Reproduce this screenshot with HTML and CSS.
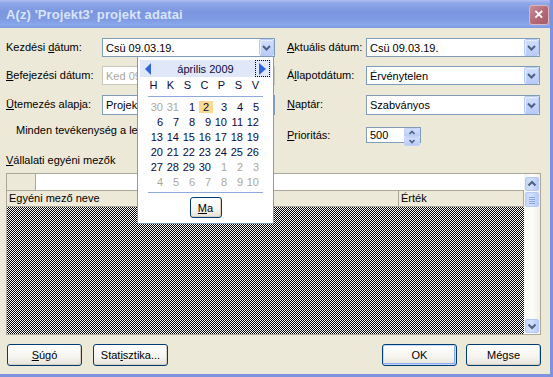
FILE: index.html
```html
<!DOCTYPE html>
<html lang="hu">
<head>
    <meta charset="UTF-8">
    <title>A(z) 'Projekt3' projekt adatai</title>
    <link rel="stylesheet" href="styles.css">
</head>
<body>

    <div class="window">

        <div class="titlebar">
            <span class="title">A(z) 'Projekt3' projekt adatai</span>
            <span class="close">
                <svg width="20" height="19" viewBox="0 0 20 19">
                    <path d="M6 5.5 L13.5 13 M13.5 5.5 L6 13" stroke="#fff" stroke-width="2" fill="none"/>
                </svg>
            </span>
        </div>

        <div class="content">

            <div class="form">
                <label>Kezdési <u>d</u>átum:</label>
                <div class="combo">
                    <span class="combo__text">Csü 09.03.19.</span>
                    <span class="combo__btn"><svg width="13" height="15" viewBox="0 0 13 15"><path d="M3 6 L6.5 9.5 L10 6" stroke="#4d6185" stroke-width="2" fill="none"/></svg></span>
                </div>
                <span></span>
                <label><u>A</u>ktuális dátum:</label>
                <div class="combo">
                    <span class="combo__text">Csü 09.03.19.</span>
                    <span class="combo__btn"><svg width="13" height="15" viewBox="0 0 13 15"><path d="M3 6 L6.5 9.5 L10 6" stroke="#4d6185" stroke-width="2" fill="none"/></svg></span>
                </div>

                <label><u>B</u>efejezési dátum:</label>
                <div class="combo combo--disabled">
                    <!-- a naptár takarja, csak a látható rész -->
                    <span class="combo__text">Ked 09</span>
                </div>
                <span></span>
                <label>Á<u>l</u>lapotdátum:</label>
                <div class="combo">
                    <span class="combo__text">Érvénytelen</span>
                    <span class="combo__btn"><svg width="13" height="15" viewBox="0 0 13 15"><path d="M3 6 L6.5 9.5 L10 6" stroke="#4d6185" stroke-width="2" fill="none"/></svg></span>
                </div>

                <label><u>Ü</u>temezés alapja:</label>
                <div class="combo combo--tall">
                    <span class="combo__text">Projek</span>
                </div>
                <span></span>
                <label><u>N</u>aptár:</label>
                <div class="combo combo--tall">
                    <span class="combo__text">Szabványos</span>
                    <span class="combo__btn"><svg width="13" height="16" viewBox="0 0 13 16"><path d="M3 6.5 L6.5 10 L10 6.5" stroke="#4d6185" stroke-width="2" fill="none"/></svg></span>
                </div>

                <div class="note">Minden tevékenység a le</div>
                <label class="label-low"><u>P</u>rioritás:</label>
                <div class="spin">
                    <span class="spin__text">500</span>
                    <span class="spin__btns">
                        <span class="spin__btn"><svg width="14" height="7" viewBox="0 0 14 7"><path d="M4.5 5 L7 2.5 L9.5 5" stroke="#4d6185" stroke-width="1.6" fill="none"/></svg></span>
                        <span class="spin__btn"><svg width="14" height="7" viewBox="0 0 14 7"><path d="M4.5 2 L7 4.5 L9.5 2" stroke="#4d6185" stroke-width="1.6" fill="none"/></svg></span>
                    </span>
                </div>
            </div>

            <div class="section-label"><u>V</u>állalati egyéni mezők</div>

            <div class="fields">
                <div class="fields__main">
                    <div class="fields__top">
                        <span class="fields__corner"></span>
                    </div>
                    <div class="fields__head">
                        <span class="fields__col fields__col--name">Egyéni mező neve</span>
                        <span class="fields__col fields__col--value">Érték</span>
                    </div>
                    <div class="fields__empty"></div>
                </div>
                <div class="scrollbar">
                    <span class="scrollbar__btn"><svg width="12" height="12" viewBox="0 0 12 12"><path d="M2.5 7.5 L6 4 L9.5 7.5" stroke="#4d6185" stroke-width="2" fill="none"/></svg></span>
                    <span class="scrollbar__thumb">
                        <svg width="12" height="13" viewBox="0 0 12 13"><path d="M3 4.5h6M3 6.5h6M3 8.5h6M3 10.5h6" stroke="#8ea6e0" stroke-width="1" fill="none"/></svg>
                    </span>
                    <span class="scrollbar__track"></span>
                    <span class="scrollbar__btn"><svg width="12" height="12" viewBox="0 0 12 12"><path d="M2.5 4.5 L6 8 L9.5 4.5" stroke="#4d6185" stroke-width="2" fill="none"/></svg></span>
                </div>
            </div>

            <div class="buttons">
                <div class="buttons__group">
                    <button class="btn"><u>S</u>úgó</button>
                    <button class="btn">Stat<u>i</u>sztika...</button>
                </div>
                <div class="buttons__group buttons__group--right">
                    <button class="btn btn--default">OK</button>
                    <button class="btn">Mégse</button>
                </div>
            </div>

        </div>

        <!-- lenyitott dátumválasztó -->
        <div class="calendar">
            <div class="calendar__head">
                <span class="calendar__prev">
                    <svg width="7" height="12" viewBox="0 0 7 12"><polygon points="6,0 6,12 0,6" fill="#2f64dc"/></svg>
                </span>
                <span class="calendar__month">április 2009</span>
                <span class="calendar__next">
                    <svg width="7" height="12" viewBox="0 0 7 12"><polygon points="0,0 0,12 7,6" fill="#2f64dc"/></svg>
                </span>
            </div>
            <div class="calendar__names">
                <span>H</span><span>K</span><span>S</span><span>C</span><span>P</span><span>S</span><span>V</span>
            </div>
            <div class="calendar__line"></div>
            <div class="calendar__days">
                <span class="off">30</span><span class="off">31</span><span>1</span><span><b class="today">2</b></span><span>3</span><span>4</span><span>5</span>
                <span>6</span><span>7</span><span>8</span><span>9</span><span>10</span><span>11</span><span>12</span>
                <span>13</span><span>14</span><span>15</span><span>16</span><span>17</span><span>18</span><span>19</span>
                <span>20</span><span>21</span><span>22</span><span>23</span><span>24</span><span>25</span><span>26</span>
                <span>27</span><span>28</span><span>29</span><span>30</span><span class="off">1</span><span class="off">2</span><span class="off">3</span>
                <span class="off">4</span><span class="off">5</span><span class="off">6</span><span class="off">7</span><span class="off">8</span><span class="off">9</span><span class="off">10</span>
            </div>
            <div class="calendar__line calendar__line--bottom"></div>
            <div class="calendar__foot">
                <button class="btn btn--small"><u>M</u>a</button>
            </div>
        </div>

    </div>

</body>
</html>
```

FILE: styles.css
```css
:root {
    --clr-face: #ece9d8;
    --clr-edge: #7f9db9;
    --clr-shadow: #aca899;
    --clr-frame: #7d93dd;
    --clr-arrow: #4d6185;
}
* {
    box-sizing: border-box;
    margin: 0;
}
body {
    width: 553px;
    height: 377px;
    overflow: hidden;
    font-family: "Liberation Sans", Arial, sans-serif;
    font-size: 11px;
    color: #000;
    background: var(--clr-face);
}
u {
    text-decoration-thickness: 1px;
    text-underline-offset: 1px;
}

.window {
    position: relative;
    width: 553px;
    height: 377px;
    display: flex;
    flex-direction: column;
    background: var(--clr-face);
    border-right: 3px solid var(--clr-frame);
    border-bottom: 3px solid var(--clr-frame);
}

/* inaktív XP címsor */
.titlebar {
    height: 28px;
    flex: none;
    display: flex;
    align-items: center;
    justify-content: space-between;
    padding-left: 6px;
    padding-right: 1px;
    background: linear-gradient(#aebff1 0, #90a8e8 3px, #7b96df 12px, #7e9ae2 19px, #8aa8ec 25px, #7f98df 28px);
}
.title {
    font-weight: bold;
    font-size: 13px;
    color: #d8e4f8;
    letter-spacing: 0.1px;
}
.close {
    width: 20px;
    height: 20px;
    margin-top: 1px;
    display: flex;
    align-items: center;
    justify-content: center;
    border: 1px solid #dfb4bb;
    border-radius: 3px;
    background: linear-gradient(135deg, #c88b94, #b06773 60%, #a95c69);
}

.content {
    flex: 1;
    padding: 10px 0 0 6px;
    display: flex;
    flex-direction: column;
}

.form {
    display: grid;
    grid-template-columns: 96px 173px 12px 79px 174px;
    grid-template-rows: 19px 20px 20px 19px;
    row-gap: 9px;
    align-items: start;
}
.form label {
    line-height: 19px;
    white-space: nowrap;
}
.form .label-low {
    align-self: end;
    line-height: 16px;
}

.combo {
    height: 19px;
    display: flex;
    align-items: center;
    justify-content: space-between;
    background: #fff;
    border: 1px solid var(--clr-edge);
    overflow: hidden;
}
.combo--tall {
    height: 20px;
}
.combo--disabled {
    border-color: #c9c7ba;
}
.combo--disabled .combo__text {
    color: var(--clr-shadow);
}
.combo__text {
    padding-left: 3px;
    white-space: nowrap;
}
.combo__btn {
    flex: none;
    width: 15px;
    height: 100%;
    display: flex;
    align-items: center;
    justify-content: center;
    border: 1px solid #b8cbf6;
    border-radius: 2px;
    background: linear-gradient(#d2defc, #b9cbf6);
    box-shadow: inset 1px 1px 0 #e6eefd;
}

.note {
    grid-column: 1 / 4;
    padding-left: 10px;
    line-height: 13px;
    white-space: nowrap;
}

.spin {
    align-self: end;
    width: 55px;
    height: 16px;
    display: flex;
    justify-content: space-between;
    background: #fff;
    border: 1px solid var(--clr-edge);
}
.spin__text {
    padding-left: 3px;
    line-height: 14px;
}
.spin__btns {
    width: 16px;
    display: flex;
    flex-direction: column;
}
.spin__btn {
    flex: 1;
    display: flex;
    align-items: center;
    justify-content: center;
    background: linear-gradient(#d2defc, #b9cbf6);
    border: 1px solid #c3d4f8;
    border-radius: 1px;
}

.section-label {
    margin-top: 11px;
    line-height: 13px;
}

/* egyéni mezők rácsa */
.fields {
    margin-top: 6px;
    width: 535px;
    height: 162px;
    display: flex;
    border: 1px solid var(--clr-shadow);
    background: #fff;
}
.fields__main {
    width: 517px;
    display: flex;
    flex-direction: column;
}
.fields__top {
    height: 16px;
    display: flex;
}
.fields__corner {
    width: 29px;
    background: var(--clr-face);
    border-right: 1px solid var(--clr-shadow);
}
.fields__head {
    height: 17px;
    display: flex;
    background: var(--clr-face);
    border-top: 1px solid var(--clr-shadow);
}
.fields__col {
    line-height: 15px;
    padding-left: 2px;
    border-right: 1px solid var(--clr-shadow);
    border-bottom: 1px solid var(--clr-shadow);
}
.fields__col--name {
    width: 392px;
}
.fields__col--value {
    width: 125px;
}
.fields__empty {
    flex: 1;
    background: repeating-conic-gradient(#000 0 25%, #fff 0 50%) 0 0 / 2px 2px;
}

.scrollbar {
    width: 16px;
    display: flex;
    flex-direction: column;
    padding: 3px 1px 1px 1px;
    background: linear-gradient(90deg, #f4f3ee, #fdfdfb 50%, #f1efe6);
}
.scrollbar__btn,
.scrollbar__thumb {
    height: 14px;
    flex: none;
    display: flex;
    align-items: center;
    justify-content: center;
    border: 1px solid #b5c9f5;
    border-radius: 2px;
    background: linear-gradient(90deg, #c4d5fb, #d3e0fd 40%, #b9ccf7);
}
.scrollbar__thumb {
    height: 15px;
    margin-top: 1px;
    align-items: flex-start;
}
.scrollbar__track {
    flex: 1;
}

.buttons {
    margin-top: 9px;
    width: 535px;
    display: flex;
    justify-content: space-between;
}
.buttons__group {
    display: flex;
    gap: 11px;
    padding-left: 1px;
}
.buttons__group--right {
    gap: 9px;
    padding-left: 0;
}
.btn {
    width: 75px;
    height: 22px;
    padding: 0;
    font: inherit;
    color: #000;
    border: 1px solid #003c74;
    border-radius: 3px;
    background: linear-gradient(#fff, #f5f4ef 60%, #e6e3da);
    box-shadow: inset -1px -1px 0 #d6d0c5;
}
.btn--default {
    box-shadow: inset 0 0 0 1px #c6d8fb, inset -1px -1px 0 1px #8cabec;
}
.btn--small {
    width: 32px;
    height: 21px;
}

/* legördülő naptár, a mezők fölött */
.calendar {
    position: absolute;
    left: 137px;
    top: 56px;
    width: 137px;
    height: 168px;
    padding: 3px 2px 0;
    background: #fff;
    border: 1px solid var(--clr-edge);
}
.calendar__head {
    height: 17px;
    display: grid;
    grid-template-columns: 20px 1fr 20px;
    align-items: center;
    background: #dfe7f8;
}
.calendar__prev {
    padding-left: 5px;
    display: flex;
}
.calendar__month {
    text-align: center;
    color: #0a0a3c;
}
.calendar__next {
    justify-self: end;
    width: 15px;
    height: 17px;
    margin-right: 1px;
    display: flex;
    align-items: center;
    justify-content: center;
    border: 1px dotted #000;
}
.calendar__names {
    margin-left: 5px;
    height: 16px;
    display: grid;
    grid-template-columns: repeat(7, 17px);
    align-items: center;
    text-align: center;
    color: #0a0a3c;
}
.calendar__line {
    margin: 3px 8px 0;
    height: 1px;
    background: #8fa9dd;
}
.calendar__line--bottom {
    margin-top: 2px;
}
.calendar__days {
    margin: 3px 0 0 7px;
    display: grid;
    grid-template-columns: repeat(7, 16px);
    grid-auto-rows: 15px;
    line-height: 15px;
    text-align: right;
    color: #0a0a3c;
}
.calendar__days .off {
    color: var(--clr-shadow);
}
.today {
    display: inline-block;
    width: 14px;
    height: 12px;
    margin-right: -2px;
    line-height: 12px;
    text-align: center;
    font-weight: normal;
    background: #fbd98f;
}
.calendar__foot {
    margin-top: 4px;
    display: flex;
    justify-content: center;
}
```
